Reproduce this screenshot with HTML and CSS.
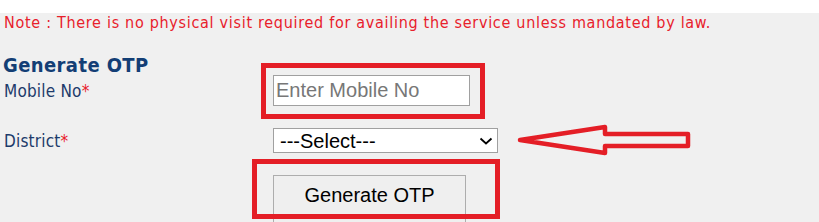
FILE: index.html
```html
<!DOCTYPE html>
<html lang="en">
<head>
    <meta charset="UTF-8">
    <title>Generate OTP</title>
    <link rel="stylesheet" href="styles.css">
</head>
<body>

<div class="panel">
    <p class="note">Note : There is no physical visit required for availing the service unless mandated by law.</p>

    <h2 class="title">Generate OTP</h2>

    <div class="otp-form">
        <label class="field-label">Mobile No<span class="req">*</span></label>
        <div class="control">
            <input class="mobile-input" type="text" placeholder="Enter Mobile No">
            <span class="mark mark-input"></span>
        </div>

        <label class="field-label">District<span class="req">*</span></label>
        <div class="control">
            <select class="district-select">
                <option>---Select---</option>
            </select>
            <svg class="chevron" width="14" height="8" viewBox="0 0 14 8">
                <polyline points="1.5,1.5 7,6.5 12.5,1.5" fill="none" stroke="#000" stroke-width="1.8"/>
            </svg>
            <!-- annotation arrow pointing at the district box -->
            <svg class="arrow" width="178" height="40" viewBox="0 0 178 40">
                <polygon points="4,20 89,7 89,14 172,14 172,26 89,26 89,33" fill="none" stroke="#e41e26" stroke-width="4.5" stroke-linejoin="round"/>
            </svg>
        </div>

        <span></span>
        <div class="control">
            <button class="otp-btn" type="button">Generate OTP</button>
            <span class="mark mark-btn"></span>
        </div>
    </div>
</div>

</body>
</html>
```

FILE: styles.css
```css
body {
    margin: 0;
    background-color: #fff;
    font-family: "DejaVu Sans", Verdana, sans-serif;
}

.panel {
    margin-top: 13px;
    height: 209px;
    padding-left: 4px;
    background-color: #f0f0f0;
    overflow: hidden;
}

.note {
    margin: 0;
    font-size: 16px;
    font-stretch: condensed;
    letter-spacing: 0.7px;
    line-height: 20px;
    color: #e8202b;
}

.title {
    margin: 22px 0 0 -1px;
    font-size: 20px;
    font-stretch: condensed;
    letter-spacing: 0.4px;
    line-height: 20px;
    color: #133e75;
}

.otp-form {
    display: grid;
    grid-template-columns: 269px auto;
    row-gap: 22px;
    align-items: center;
    justify-content: start;
}

.field-label {
    font-size: 17px;
    font-stretch: condensed;
    letter-spacing: 0.2px;
    color: #1d3b6b;
}

.req {
    color: #e8202b;
}

.control {
    position: relative;
    display: flex;
    justify-self: start;
}

.mobile-input {
    box-sizing: border-box;
    width: 197px;
    height: 31px;
    margin: 0;
    padding: 0 2px;
    border: 1px solid #a0a0a0;
    background-color: #fff;
    font-family: "Liberation Sans", Arial, sans-serif;
    font-size: 20px;
    outline: none;
}

.mobile-input::placeholder {
    color: #777;
}

.district-select {
    box-sizing: border-box;
    width: 225px;
    height: 25px;
    margin: 0;
    padding: 0 0 0 6px;
    border: 1px solid #a0a0a0;
    border-radius: 0;
    background-color: #fff;
    font-family: "Liberation Sans", Arial, sans-serif;
    font-size: 20px;
    color: #000;
    appearance: none;
    -webkit-appearance: none;
}

.chevron {
    position: absolute;
    left: 206px;
    top: 9px;
    pointer-events: none;
}

.arrow {
    position: absolute;
    left: 243px;
    top: -8px;
}

.otp-btn {
    box-sizing: border-box;
    width: 193px;
    height: 52px;
    margin: 0;
    padding: 0 0 12px;
    border: 1px solid #adadad;
    border-radius: 0;
    background-color: #efefef;
    font-family: "Liberation Sans", Arial, sans-serif;
    font-size: 20px;
    color: #000;
}

.mark {
    position: absolute;
    border: 5px solid #e41e26;
    pointer-events: none;
}

.mark-input {
    top: -12px;
    left: -12px;
    right: -15px;
    bottom: -13px;
}

.mark-btn {
    top: -16px;
    left: -21px;
    right: -34px;
    bottom: 8px;
}
```
